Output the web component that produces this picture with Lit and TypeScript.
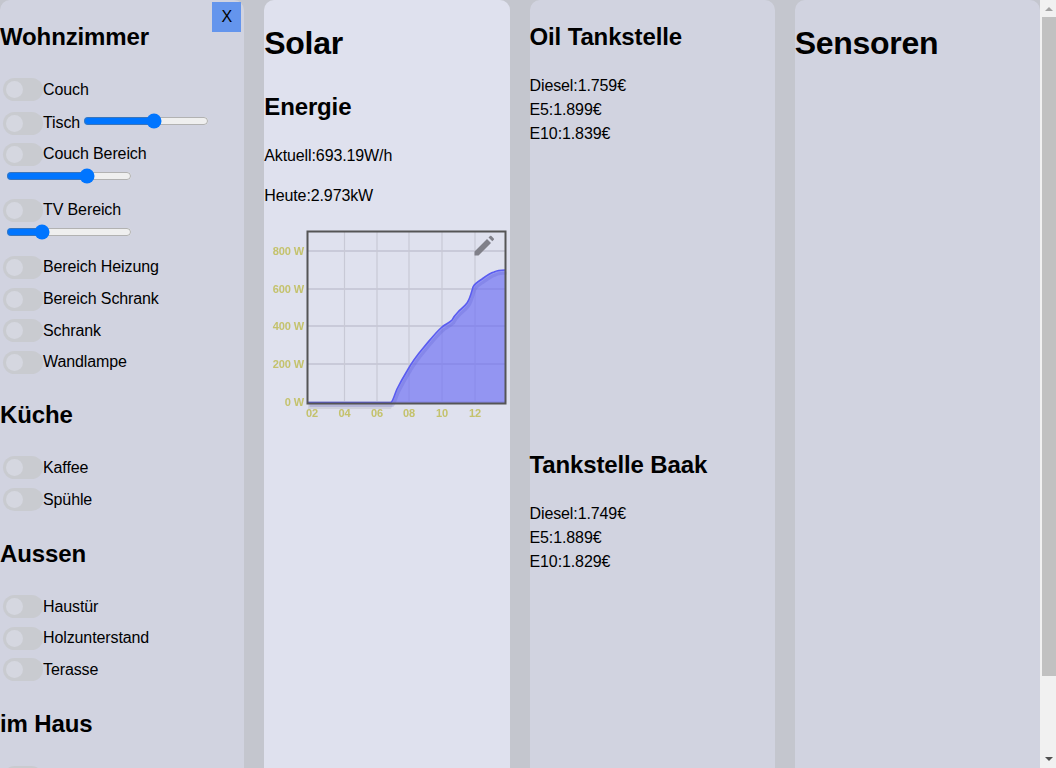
import { LitElement, html, css, svg } from "lit";
import { customElement } from "lit/decorators.js";

type Item = { name: string; slider?: "inline" | "below"; value?: number; tight?: boolean };

const groups: { title: string; items: Item[] }[] = [
  {
    title: "Wohnzimmer",
    items: [
      { name: "Couch" },
      { name: "Tisch", slider: "inline", value: 57 },
      { name: "Couch Bereich", slider: "below", value: 66, tight: true },
      { name: "TV Bereich", slider: "below", value: 25 },
      { name: "Bereich Heizung" },
      { name: "Bereich Schrank" },
      { name: "Schrank" },
      { name: "Wandlampe" },
    ],
  },
  { title: "Küche", items: [{ name: "Kaffee" }, { name: "Spühle" }] },
  { title: "Aussen", items: [{ name: "Haustür" }, { name: "Holzunterstand" }, { name: "Terasse" }] },
  { title: "im Haus", items: [{ name: "" }] },
];

const curve =
  "M308 402.5 L391 402.5 C393 401 394 396 397 389 C400 383 404 376 407 371 C412 362 418 354 424 347 C430 340 436 332 442 327 C446 324 449 323 452 320 C454 316 456 314 458 312 C461 309 464 307 467 303 C470 299 471 294 473 287 C475 283 479 281 482 279 C486 276 490 273 494 272 C498 270 502 270 505 270";

@customElement("app-root")
export class AppRoot extends LitElement {
  static styles = css`
    :host {
      display: flex;
      height: 768px;
      overflow: hidden;
      background: #c4c6ce;
      font-family: "Liberation Sans", Arial, sans-serif;
      font-size: 16px;
      letter-spacing: -0.11px;
      color: #000;
    }
    .grid {
      flex: 1;
      min-width: 0;
      display: grid;
      grid-template-columns: 244.25px repeat(3, 1fr);
      gap: 20px;
      height: 768px;
      overflow: hidden;
    }
    .panel {
      position: relative;
      background: #d1d3e0;
      border-radius: 10px 10px 0 0;
      padding-top: 3px;
      height: 1000px;
    }
    .solar {
      background: #dfe1ee;
    }
    h1 {
      font-size: 32px;
      line-height: 37px;
      margin: 22.4px 0 21.44px;
      letter-spacing: -0.3px;
    }
    h2 {
      font-size: 24px;
      line-height: 27.6px;
      margin: 20px 0 23.4px;
      letter-spacing: -0.13px;
    }
    .close {
      position: absolute;
      top: 2px;
      right: 3px;
      width: 29px;
      height: 30px;
      background: #6495ed;
      border: 0;
      padding: 0;
      font: 16px "Liberation Sans", Arial, sans-serif;
      color: #000;
    }
    .group {
      margin-bottom: 24.5px;
    }
    .group:first-of-type {
      margin-bottom: 23px;
    }
    .row {
      display: flex;
      align-items: center;
      height: 31.65px;
    }
    .row.shifted {
      margin: 2px 0 -1px;
    }
    .toggle {
      flex: none;
      position: relative;
      width: 40px;
      height: 23px;
      margin-left: 3px;
      border-radius: 12px;
      background: #c9cbd0;
    }
    .toggle::after {
      content: "";
      position: absolute;
      left: 3px;
      top: 3px;
      width: 17px;
      height: 17px;
      border-radius: 50%;
      background: #d5d7e0;
    }
    input[type="range"] {
      width: 126px;
      flex: none;
    }
    .inline {
      margin: 0 0 4px 3px;
    }
    .below {
      display: block;
      margin: -2px 0 11.5px 6px;
      height: 16px;
    }
    .below.tight {
      margin-bottom: 10.5px;
    }
    .energie {
      margin: 31px 0 25.6px;
    }
    p {
      margin: 21.6px 0;
      line-height: 18.4px;
    }
    svg {
      display: block;
      margin-top: -2px;
      filter: blur(0.35px);
    }
    .axis {
      font: bold 11px "Liberation Sans", Arial, sans-serif;
      fill: #c4c26c;
    }
    .tank {
      height: 408px;
    }
    .price {
      line-height: 24px;
    }
    .tank + div .price {
      margin-top: 1px;
    }
    .scrollbar {
      flex: none;
      position: relative;
      width: 16px;
      background: #f1f1f1;
    }
    .thumb {
      position: absolute;
      left: 2px;
      right: 0;
      top: 17px;
      height: 659px;
      background: #c1c1c1;
    }
    .arrow {
      position: absolute;
      left: 5px;
      width: 0;
      height: 0;
      border-left: 4px solid transparent;
      border-right: 4px solid transparent;
    }
    .up {
      top: 7px;
      border-bottom: 4px solid #a3a3a3;
    }
    .down {
      bottom: 7px;
      border-top: 4px solid #505050;
    }
  `;

  private renderItem(i: Item) {
    return html`
      <div class="row ${i.slider === "inline" ? "shifted" : ""}">
        <span class="toggle"></span><span>${i.name}</span>
        ${i.slider === "inline"
          ? html`<input class="inline" type="range" .value=${String(i.value)} />`
          : ""}
      </div>
      ${i.slider === "below"
        ? html`<input class="below ${i.tight ? "tight" : ""}" type="range" .value=${String(i.value)} />`
        : ""}
    `;
  }

  private chart() {
    const ys: [number, string][] = [
      [251, "800 W"],
      [289, "600 W"],
      [326, "400 W"],
      [364, "200 W"],
      [402, "0 W"],
    ];
    const xs: [number, string][] = [
      [312, "02"],
      [344.5, "04"],
      [377, "06"],
      [409, "08"],
      [442, "10"],
      [475, "12"],
    ];
    return html`<svg width="245" height="200" viewBox="264 225 245 200">
      ${ys.map(
        ([y, t]) => svg`
          <line x1="308" x2="506" y1=${y} y2=${y} stroke="#b3b4c4" stroke-width="1.2"></line>
          <text class="axis" x="304" y=${y + 3.5} text-anchor="end">${t}</text>`
      )}
      ${xs.map(
        ([x, t]) => svg`
          ${t !== "02"
            ? svg`<line x1=${x} x2=${x} y1="232" y2="404" stroke="#c8c9d6" stroke-width="1.2"></line>`
            : ""}
          <text class="axis" x=${x} y="417" text-anchor="middle">${t}</text>`
      )}
      <path d="M308 404 L393 404 L391 409 L308 409 Z" fill="#000" opacity=".07"></path>
      <path d="${curve} L505 403 L308 403 Z" fill="#6a6cf5" opacity=".65"></path>
      <path d="${curve}" transform="translate(1.5 3)" fill="none" stroke="#5557c8" stroke-width="3" opacity=".22"></path>
      <path d="${curve}" fill="none" stroke="#5a5cf0" stroke-width="1.6"></path>
      <rect x="307.5" y="231.5" width="198" height="172" fill="none" stroke="#555" stroke-width="2"></rect>
      <path d="M474.5 255.5 V251.5 L487 239 L491 243 L478.5 255.5 Z M488.5 237.5 L490 236 Q490.7 235.4 491.4 236 L493.8 238.4 Q494.4 239.1 493.8 239.8 L492.3 241.3 Z" fill="#808089"></path>
    </svg>`;
  }

  render() {
    return html`
      <div class="grid">
        <section class="panel">
          <button class="close">X</button>
          ${groups.map(
            (g) => html`<div class="group">
              <h2>${g.title}</h2>
              ${g.items.map((i) => this.renderItem(i))}
            </div>`
          )}
        </section>
        <section class="panel solar">
          <h1>Solar</h1>
          <h2 class="energie">Energie</h2>
          <p>Aktuell:693.19W/h</p>
          <p>Heute:2.973kW</p>
          ${this.chart()}
        </section>
        <section class="panel">
          <div class="tank">
            <h2>Oil Tankstelle</h2>
            <div class="price">Diesel:1.759€<br />E5:1.899€<br />E10:1.839€</div>
          </div>
          <div>
            <h2>Tankstelle Baak</h2>
            <div class="price">Diesel:1.749€<br />E5:1.889€<br />E10:1.829€</div>
          </div>
        </section>
        <section class="panel"><h1>Sensoren</h1></section>
      </div>
      <div class="scrollbar">
        <div class="arrow up"></div>
        <div class="thumb"></div>
        <div class="arrow down"></div>
      </div>
    `;
  }
}
